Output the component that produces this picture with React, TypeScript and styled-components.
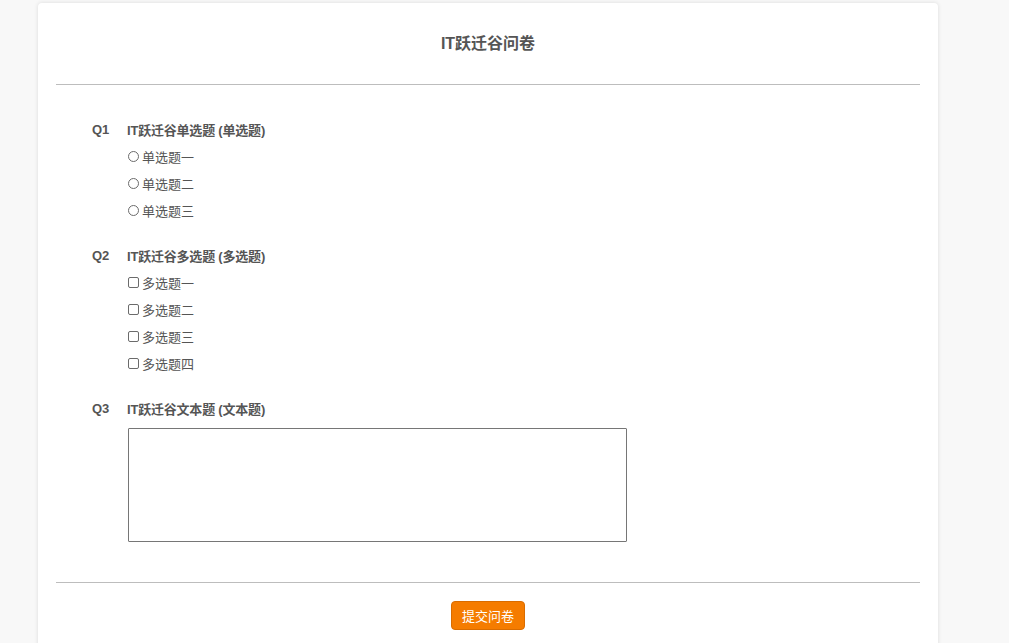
import React from "react";
import styled, { createGlobalStyle } from "styled-components";

type Question = {
  id: string;
  title: string;
  kind: "radio" | "checkbox" | "text";
  options?: string[];
};

const questions: Question[] = [
  {
    id: "Q1",
    title: "IT跃迁谷单选题 (单选题)",
    kind: "radio",
    options: ["单选题一", "单选题二", "单选题三"],
  },
  {
    id: "Q2",
    title: "IT跃迁谷多选题 (多选题)",
    kind: "checkbox",
    options: ["多选题一", "多选题二", "多选题三", "多选题四"],
  },
  { id: "Q3", title: "IT跃迁谷文本题 (文本题)", kind: "text" },
];

const GlobalStyle = createGlobalStyle`
  html, body {
    margin: 0;
    padding: 0;
    background: #f8f8f8;
    font-family: "Liberation Sans", "Noto Sans CJK SC", sans-serif;
    color: #555;
  }
`;

const Page = styled.div`
  padding: 3px 0 0 38px;
  height: 640px;
  overflow: hidden;
`;

const Card = styled.div`
  width: 864px;
  padding: 0 18px 20px;
  background: #fff;
  border-radius: 4px;
  box-shadow: 0 0 4px rgba(0, 0, 0, 0.12);
`;

const Header = styled.div`
  height: 81px;
  line-height: 81px;
  text-align: center;
  font-size: 16px;
  font-weight: bold;
  color: #555;
`;

const Rule = styled.div`
  height: 1px;
  background: #bdbdbd;
`;

const Body = styled.div`
  padding: 31px 0 0 36px;
  display: flex;
  flex-direction: column;
  gap: 18px;
`;

const QuestionBlock = styled.div`
  display: flex;
  flex-direction: column;
`;

const TitleRow = styled.div`
  display: flex;
  height: 27px;
  align-items: center;
  font-size: 13px;
  font-weight: bold;
  color: #555;
`;

const QNum = styled.span`
  width: 35px;
`;

const TitleText = styled.span`
  letter-spacing: -0.2px;
`;

const OptionRow = styled.label`
  display: flex;
  align-items: center;
  height: 27px;
  padding-left: 36px;
  font-size: 13px;
  color: #555;
`;

const Mark = styled.span<{ $round: boolean }>`
  width: 9px;
  height: 9px;
  border: 1px solid #6b6b6b;
  border-radius: ${(p) => (p.$round ? "50%" : "2px")};
  margin-right: 3px;
  background: #fff;
`;

const TextBox = styled.textarea`
  margin: 6px 0 0 36px;
  width: 495px;
  height: 110px;
  border: 1px solid #767676;
  border-radius: 1px;
  resize: none;
  padding: 1px;
  font-family: inherit;
`;

const Footer = styled.div`
  margin-top: 40px;
`;

const ButtonRow = styled.div`
  display: flex;
  justify-content: center;
  padding-top: 18px;
`;

const SubmitButton = styled.button`
  width: 74px;
  height: 29px;
  background: #f57c00;
  border: 1px solid #d96c00;
  border-radius: 4px;
  color: #fff;
  font-size: 13px;
  font-family: inherit;
  padding: 0;
`;

export default function App() {
  return (
    <Page>
      <GlobalStyle />
      <Card>
        <Header>IT跃迁谷问卷</Header>
        <Rule />
        <Body>
          {questions.map((q) => (
            <QuestionBlock key={q.id}>
              <TitleRow>
                <QNum>{q.id}</QNum>
                <TitleText>{q.title}</TitleText>
              </TitleRow>
              {q.kind === "text" ? (
                <TextBox />
              ) : (
                q.options!.map((opt) => (
                  <OptionRow key={opt}>
                    <Mark $round={q.kind === "radio"} />
                    {opt}
                  </OptionRow>
                ))
              )}
            </QuestionBlock>
          ))}
        </Body>
        <Footer>
          <Rule />
          <ButtonRow>
            <SubmitButton>提交问卷</SubmitButton>
          </ButtonRow>
        </Footer>
      </Card>
    </Page>
  );
}
